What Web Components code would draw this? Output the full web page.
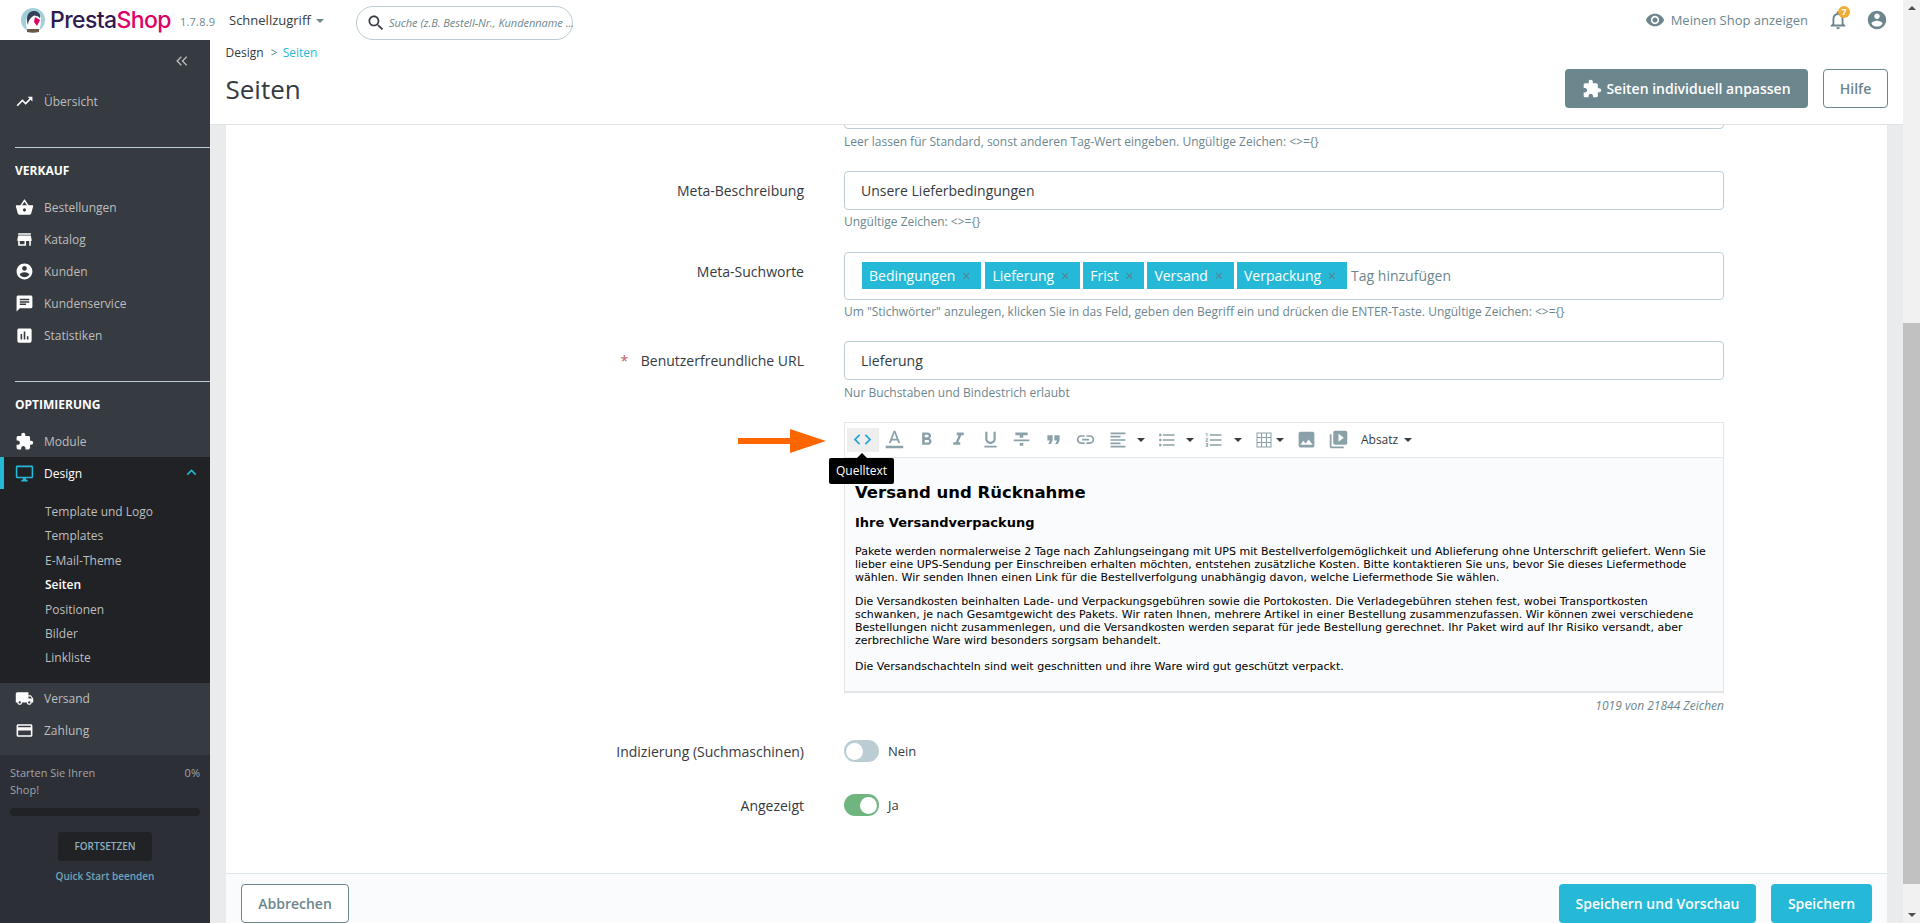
<!DOCTYPE html>
<html lang="de">
<head>
<meta charset="utf-8">
<title>Seiten</title>
<style>
  html, body { margin: 0; height: 100%; overflow: hidden; }
  body { font-family: "Open Sans", "Liberation Sans", sans-serif; font-size: 14px; color: #363a41; background: #eaebec; }
</style>
</head>
<body>
<ps-app>
  <ps-header slot="header"></ps-header>
  <ps-sidebar slot="sidebar">
    <ps-nav-item icon="trending" style="margin-top:45px">Übersicht</ps-nav-item>
    <ps-nav-title style="margin-top:30px">VERKAUF</ps-nav-title>
    <ps-nav-item icon="basket">Bestellungen</ps-nav-item>
    <ps-nav-item icon="store">Katalog</ps-nav-item>
    <ps-nav-item icon="account">Kunden</ps-nav-item>
    <ps-nav-item icon="chat">Kundenservice</ps-nav-item>
    <ps-nav-item icon="stats">Statistiken</ps-nav-item>
    <ps-nav-title style="margin-top:30px">OPTIMIERUNG</ps-nav-title>
    <ps-nav-item icon="extension">Module</ps-nav-item>
    <ps-nav-group icon="desktop" label="Design">
      <ps-nav-sub>Template und Logo</ps-nav-sub>
      <ps-nav-sub>Templates</ps-nav-sub>
      <ps-nav-sub>E-Mail-Theme</ps-nav-sub>
      <ps-nav-sub active>Seiten</ps-nav-sub>
      <ps-nav-sub>Positionen</ps-nav-sub>
      <ps-nav-sub>Bilder</ps-nav-sub>
      <ps-nav-sub>Linkliste</ps-nav-sub>
    </ps-nav-group>
    <ps-nav-item icon="shipping">Versand</ps-nav-item>
    <ps-nav-item icon="card">Zahlung</ps-nav-item>
    <ps-onboarding></ps-onboarding>
  </ps-sidebar>
  <ps-page-head slot="head"></ps-page-head>
  <ps-card slot="main">
    <ps-form-row style="margin-top:-35px;margin-bottom:20px;--help-top:4px" help="Leer lassen für Standard, sonst anderen Tag-Wert eingeben. Ungültige Zeichen: &lt;&gt;={}">
      <ps-input></ps-input>
    </ps-form-row>
    <ps-form-row label="Meta-Beschreibung" help="Ungültige Zeichen: &lt;&gt;={}">
      <ps-input>Unsere Lieferbedingungen</ps-input>
    </ps-form-row>
    <ps-form-row label="Meta-Suchworte" style="margin-bottom:20px" help="Um &quot;Stichwörter&quot; anzulegen, klicken Sie in das Feld, geben den Begriff ein und drücken die ENTER-Taste. Ungültige Zeichen: &lt;&gt;={}">
      <ps-tags>
        <ps-tag style="margin-right:1px">Bedingungen</ps-tag>
        <ps-tag>Lieferung</ps-tag>
        <ps-tag>Frist</ps-tag>
        <ps-tag>Versand</ps-tag>
        <ps-tag>Verpackung</ps-tag>
      </ps-tags>
    </ps-form-row>
    <ps-form-row required label="Benutzerfreundliche URL" style="margin-bottom:20px;--help-top:4px" help="Nur Buchstaben und Bindestrich erlaubt">
      <ps-input>Lieferung</ps-input>
    </ps-form-row>
    <ps-form-row>
      <ps-editor>
        <h1>Versand und Rücknahme</h1>
        <h2>Ihre Versandverpackung</h2>
        <p class="first">Pakete werden normalerweise 2 Tage nach Zahlungseingang mit UPS mit Bestellverfolgemöglichkeit und Ablieferung ohne Unterschrift geliefert. Wenn Sie<br>lieber eine UPS-Sendung per Einschreiben erhalten möchten, entstehen zusätzliche Kosten. Bitte kontaktieren Sie uns, bevor Sie dieses Liefermethode<br>wählen. Wir senden Ihnen einen Link für die Bestellverfolgung unabhängig davon, welche Liefermethode Sie wählen.</p>
        <p>Die Versandkosten beinhalten Lade- und Verpackungsgebühren sowie die Portokosten. Die Verladegebühren stehen fest, wobei Transportkosten<br>schwanken, je nach Gesamtgewicht des Pakets. Wir raten Ihnen, mehrere Artikel in einer Bestellung zusammenzufassen. Wir können zwei verschiedene<br>Bestellungen nicht zusammenlegen, und die Versandkosten werden separat für jede Bestellung gerechnet. Ihr Paket wird auf Ihr Risiko versandt, aber<br>zerbrechliche Ware wird besonders sorgsam behandelt.</p>
        <p class="last">Die Versandschachteln sind weit geschnitten und ihre Ware wird gut geschützt verpackt.</p>
      </ps-editor>
    </ps-form-row>
    <ps-form-row label="Indizierung (Suchmaschinen)" style="margin-top:-4px">
      <ps-toggle>Nein</ps-toggle>
    </ps-form-row>
    <ps-form-row label="Angezeigt" style="margin-top:-6px">
      <ps-toggle on>Ja</ps-toggle>
    </ps-form-row>
    <ps-form-footer slot="footer"></ps-form-footer>
  </ps-card>
  <ps-scrollbar slot="scrollbar"></ps-scrollbar>
</ps-app>

<script>
const ICONS = {
  trending: 'M16 6l2.29 2.29-4.88 4.88-4-4L2 16.59 3.41 18l6-6 4 4 6.3-6.29L22 12V6z',
  basket: 'M17.21 9l-4.38-6.56c-.19-.28-.51-.42-.83-.42-.32 0-.64.14-.83.43L6.79 9H2c-.55 0-1 .45-1 1 0 .09.01.18.04.27l2.54 9.27c.23.84 1 1.46 1.92 1.46h13c.92 0 1.69-.62 1.93-1.46l2.54-9.27L23 10c0-.55-.45-1-1-1h-4.79zM9 9l3-4.4L15 9H9zm3 8c-1.1 0-2-.9-2-2s.9-2 2-2 2 .9 2 2-.9 2-2 2z',
  store: 'M20 4H4v2h16V4zm1 10v-2l-1-5H4l-1 5v2h1v6h10v-6h4v6h2v-6h1zm-9 4H6v-4h6v4z',
  account: 'M12 2C6.48 2 2 6.48 2 12s4.48 10 10 10 10-4.48 10-10S17.52 2 12 2zm0 3c1.66 0 3 1.34 3 3s-1.34 3-3 3-3-1.34-3-3 1.34-3 3-3zm0 14.2c-2.5 0-4.71-1.28-6-3.22.03-1.99 4-3.08 6-3.08 1.99 0 5.97 1.09 6 3.08-1.29 1.94-3.5 3.22-6 3.22z',
  chat: 'M20 2H4c-1.1 0-1.99.9-1.99 2L2 22l4-4h14c1.1 0 2-.9 2-2V4c0-1.1-.9-2-2-2zM6 9h12v2H6V9zm8 5H6v-2h8v2zm4-6H6V6h12v2z',
  stats: 'M19 3H5c-1.1 0-2 .9-2 2v14c0 1.1.9 2 2 2h14c1.1 0 2-.9 2-2V5c0-1.1-.9-2-2-2zM9 17H7v-7h2v7zm4 0h-2V7h2v10zm4 0h-2v-4h2v4z',
  extension: 'M20.5 11H19V7c0-1.1-.9-2-2-2h-4V3.5C13 2.12 11.88 1 10.5 1S8 2.12 8 3.5V5H4c-1.1 0-1.99.9-1.99 2v3.8H3.5c1.49 0 2.7 1.21 2.7 2.7s-1.21 2.7-2.7 2.7H2V20c0 1.1.9 2 2 2h3.8v-1.5c0-1.49 1.21-2.7 2.7-2.7 1.49 0 2.7 1.21 2.7 2.7V22H17c1.1 0 2-.9 2-2v-4h1.5c1.38 0 2.5-1.12 2.5-2.5S21.88 11 20.5 11z',
  desktop: 'M21 2H3c-1.1 0-2 .9-2 2v12c0 1.1.9 2 2 2h7v2H8v2h8v-2h-2v-2h7c1.1 0 2-.9 2-2V4c0-1.1-.9-2-2-2zm0 14H3V4h18v12z',
  shipping: 'M20 8h-3V4H3c-1.1 0-2 .9-2 2v11h2c0 1.66 1.34 3 3 3s3-1.34 3-3h6c0 1.66 1.34 3 3 3s3-1.34 3-3h2v-5l-3-4zM6 18.5c-.83 0-1.5-.67-1.5-1.5s.67-1.5 1.5-1.5 1.5.67 1.5 1.5-.67 1.5-1.5 1.5zm13.5-9l1.96 2.5H17V9.5h2.5zm-1.5 9c-.83 0-1.5-.67-1.5-1.5s.67-1.5 1.5-1.5 1.5.67 1.5 1.5-.67 1.5-1.5 1.5z',
  card: 'M20 4H4c-1.11 0-1.99.89-1.99 2L2 18c0 1.11.89 2 2 2h16c1.11 0 2-.89 2-2V6c0-1.11-.89-2-2-2zm0 14H4v-6h16v6zm0-10H4V6h16v2z',
  eye: 'M12 4.5C7 4.5 2.73 7.61 1 12c1.73 4.39 6 7.5 11 7.5s9.27-3.11 11-7.5c-1.73-4.39-6-7.5-11-7.5zM12 17c-2.76 0-5-2.24-5-5s2.24-5 5-5 5 2.24 5 5-2.24 5-5 5zm0-8c-1.66 0-3 1.34-3 3s1.34 3 3 3 3-1.34 3-3-1.34-3-3-3z',
  bell: 'M12 22c1.1 0 2-.9 2-2h-4c0 1.1.9 2 2 2zm6-6v-5c0-3.07-1.63-5.64-4.5-6.32V4c0-.83-.67-1.5-1.5-1.5s-1.5.67-1.5 1.5v.68C7.64 5.36 6 7.92 6 11v5l-2 2v1h16v-1l-2-2zm-2 1H8v-6c0-2.48 1.51-4.5 4-4.5s4 2.02 4 4.5v6z',
  search: 'M15.5 14h-.79l-.28-.27C15.41 12.59 16 11.11 16 9.5 16 5.91 13.09 3 9.5 3S3 5.91 3 9.5 5.91 16 9.5 16c1.61 0 3.09-.59 4.23-1.57l.27.28v.79l5 4.99L20.49 19l-4.99-5zm-6 0C7.01 14 5 11.99 5 9.5S7.01 5 9.5 5 14 7.01 14 9.5 11.99 14 9.5 14z',
  code: 'M9.4 16.6L4.8 12l4.6-4.6L8 6l-6 6 6 6 1.4-1.4zm5.2 0l4.6-4.6-4.6-4.6L16 6l6 6-6 6-1.4-1.4z',
  color: 'M11 2L5.5 16h2.25l1.12-3h6.25l1.12 3h2.25L13 2h-2zM9.62 11L12 4.67 14.38 11H9.62zM2 19h20v3H2z',
  bold: 'M15.6 10.79c.97-.67 1.65-1.77 1.65-2.79 0-2.26-1.75-4-4-4H7v14h7.04c2.09 0 3.71-1.7 3.71-3.79 0-1.52-.86-2.82-2.15-3.42zM10 6.5h3c.83 0 1.5.67 1.5 1.5s-.67 1.5-1.5 1.5h-3v-3zm3.5 9H10v-3h3.5c.83 0 1.5.67 1.5 1.5s-.67 1.5-1.5 1.5z',
  italic: 'M10 4v3h2.21l-3.42 8H6v3h8v-3h-2.21l3.42-8H18V4z',
  underline: 'M12 17c3.31 0 6-2.69 6-6V3h-2.5v8c0 1.93-1.57 3.5-3.5 3.5S8.5 12.93 8.5 11V3H6v8c0 3.31 2.69 6 6 6zm-7 2v2h14v-2H5z',
  strike: 'M10 19h4v-3h-4v3zM5 4v3h5v3h4V7h5V4H5zM3 14h18v-2H3v2z',
  quote: 'M6 17h3l2-4V7H5v6h3zm8 0h3l2-4V7h-6v6h3z',
  link: 'M3.9 12c0-1.71 1.39-3.1 3.1-3.1h4V7H7c-2.76 0-5 2.24-5 5s2.24 5 5 5h4v-1.9H7c-1.71 0-3.1-1.39-3.1-3.1zM8 13h8v-2H8v2zm9-6h-4v1.9h4c1.71 0 3.1 1.39 3.1 3.1s-1.39 3.1-3.1 3.1h-4V17h4c2.76 0 5-2.24 5-5s-2.24-5-5-5z',
  alignleft: 'M15 15H3v2h12v-2zm0-8H3v2h12V7zM3 13h18v-2H3v2zm0 8h18v-2H3v2zM3 3v2h18V3H3z',
  bullets: 'M4 10.5c-.83 0-1.5.67-1.5 1.5s.67 1.5 1.5 1.5 1.5-.67 1.5-1.5-.67-1.5-1.5-1.5zm0-6c-.83 0-1.5.67-1.5 1.5S3.17 7.5 4 7.5 5.5 6.83 5.5 6 4.83 4.5 4 4.5zm0 12c-.83 0-1.5.68-1.5 1.5s.68 1.5 1.5 1.5 1.5-.68 1.5-1.5-.67-1.5-1.5-1.5zM7 19h14v-2H7v2zm0-6h14v-2H7v2zm0-8v2h14V5H7z',
  numbers: 'M2 17h2v.5H3v1h1v.5H2v1h3v-4H2v1zm1-9h1V4H2v1h1v3zm-1 3h1.8L2 13.1v.9h3v-1H3.2L5 10.9V10H2v1zm5-6v2h14V5H7zm0 14h14v-2H7v2zm0-6h14v-2H7v2z',
  table: 'M3 3h1.2v18H3zM8.400 3h1.200v18H8.400zM14.400 3h1.200v18h-1.200zM19.800 3H21v18h-1.200zM3 3h18v1.200H3zM3 8.400h18v1.200H3zM3 14.400h18v1.200H3zM3 19.800h18V21H3z',
  image: 'M21 19V5c0-1.1-.9-2-2-2H5c-1.1 0-2 .9-2 2v14c0 1.1.9 2 2 2h14c1.1 0 2-.9 2-2zM8.5 13.5l2.5 3.01L14.5 12l4.5 6H5l3.5-4.5z',
  video: 'M4 6H2v14c0 1.1.9 2 2 2h14v-2H4V6zm16-4H8c-1.1 0-2 .9-2 2v12c0 1.1.9 2 2 2h12c1.1 0 2-.9 2-2V4c0-1.1-.9-2-2-2zm-8 12.5v-9l6 4.5-6 4.5z',
  chevronup: 'M7.41 15.41L12 10.83l4.59 4.58L18 14l-6-6-6 6z'
};

// small helper, every element below is just a template in an open shadow root
function define(tag, html, extra = {}) {
  const tpl = document.createElement('template');
  tpl.innerHTML = html;
  customElements.define(tag, class extends HTMLElement {
    static get observedAttributes() { return extra.observed || []; }
    constructor() {
      super();
      this.attachShadow({ mode: 'open' }).appendChild(tpl.content.cloneNode(true));
    }
    connectedCallback() {
      if (extra.connected) extra.connected.call(this, this.shadowRoot);
    }
    attributeChangedCallback(name, old, value) {
      if (extra.changed) extra.changed.call(this, this.shadowRoot, name, value);
    }
  });
}

define('ps-icon', `<style>
  :host { display: inline-flex; width: 18px; height: 18px; flex: none; color: inherit; }
  svg { width: 100%; height: 100%; fill: currentColor; display: block; }
</style><svg viewBox="0 0 24 24"><path></path></svg>`, {
  observed: ['name'],
  changed(root, name, value) { root.querySelector('path').setAttribute('d', ICONS[value] || ''); }
});

define('ps-app', `<style>
  :host { display: grid; height: 923px; grid-template-columns: 210px 1fr 17px; grid-template-rows: 40px 84.500px minmax(0, 1fr); background: #eaebec; }
  ::slotted([slot=header]) { grid-column: 1 / 3; }
  ::slotted([slot=sidebar]) { grid-row: 2 / 4; }
  ::slotted([slot=scrollbar]) { grid-column: 3; grid-row: 1 / 4; }
  ::slotted([slot=head]) { grid-column: 2; grid-row: 2; }
  ::slotted([slot=main]) { grid-column: 2; grid-row: 3; }
</style>
<slot name="header"></slot><slot name="sidebar"></slot><slot name="head"></slot><slot name="main"></slot><slot name="scrollbar"></slot>`);

define('ps-header', `<style>
  :host { display: flex; align-items: center; height: 40px; background: #fff; padding-left: 21px; box-sizing: border-box; position: relative; z-index: 2; }
  .logo { display: flex; align-items: center; gap: 5px; width: 159px; flex: none; }
  .logo svg { flex: none; }
  .name { font-family: "Inter", "Open Sans", sans-serif; font-size: 23px; font-weight: 500; letter-spacing: -.6px; color: #2e1a50; line-height: 1; }
  .name b { font-weight: 500; color: #df0067; }
  .ver { font-size: 11px; color: #6c868e; width: 49px; padding-top: 2px; letter-spacing: .2px; flex: none; }
  .quick { font-size: 13px; color: #363a41; display: flex; align-items: center; gap: 5px; width: 127px; flex: none; }
  .caret { border: 4px solid transparent; border-top-color: #6c868e; border-bottom: 0; margin-top: 1px; width: 0; height: 0; }
  .search { width: 217px; height: 34px; margin-top: 5px; border: 1px solid #bbcdd2; border-radius: 17px; box-sizing: border-box; display: flex; align-items: center; gap: 3px; padding-left: 9px; color: #363a41; flex: none; }
  .search ps-icon { width: 20px; height: 20px; }
  .search span { font-size: 11px; letter-spacing: -.02px; font-style: italic; color: #6c868e; white-space: nowrap; }
  .right { margin-left: auto; display: flex; align-items: center; padding-right: 15px; }
  .shop { display: flex; align-items: center; gap: 6px; font-size: 13px; color: #6c868e; }
  .shop ps-icon { width: 20px; height: 20px; }
  .bell { position: relative; margin-left: 19px; width: 22px; height: 22px; color: #6c868e; }
  .bell ps-icon { width: 22px; height: 22px; }
  .badge { position: absolute; left: 11px; top: -3px; width: 12px; height: 12px; border-radius: 50%; background: #f0ad35; color: #fff; font-size: 9px; font-weight: 700; line-height: 12px; text-align: center; }
  .acct { margin-left: 17px; color: #6c868e; width: 22px; height: 22px; }
</style>
<div class="logo">
  <svg width="24" height="26" viewBox="0 0 24 26">
    <circle cx="12" cy="13" r="12" fill="#a3d0d8"/>
    <path d="M7 25 C3 17 5 7 12 5 C17 4 20 8 20 13 C20 18 19 22 17 25 Z" fill="#fff"/>
    <path d="M6 12 C6 6 10 3.500 14 4 C18 4.500 20 8 19 11 C16 8 12 8 10 11 C8 13 7 15 7 18 C6 16 6 14 6 12 Z" fill="#34405a"/>
    <path d="M14 10 L19 13 L16 19 L13 15 Z" fill="#df0067"/>
    <circle cx="13.500" cy="9.500" r="1" fill="#fff"/>
    <path d="M6 22 H18 V25 C14 26 10 26 6 25 Z" fill="#6b5a48"/>
  </svg>
  <span class="name">Presta<b>Shop</b></span>
</div>
<span class="ver">1.7.8.9</span>
<span class="quick">Schnellzugriff <i class="caret"></i></span>
<div class="search"><ps-icon name="search"></ps-icon><span>Suche (z.B. Bestell-Nr., Kundenname ...</span></div>
<div class="right">
  <div class="shop"><ps-icon name="eye"></ps-icon>Meinen Shop anzeigen</div>
  <div class="bell"><ps-icon name="bell"></ps-icon><span class="badge">7</span></div>
  <ps-icon class="acct" name="account"></ps-icon>
</div>`);

define('ps-sidebar', `<style>
  :host { display: flex; flex-direction: column; background: #363a41; color: #bebebe; overflow: hidden; }
  .toggle { position: absolute; left: 174px; top: 53px; width: 16px; height: 16px; color: #bebebe; }
</style>
<svg class="toggle" viewBox="0 0 24 24" fill="currentColor"><path d="M11.700 6.400 10.300 5l-7 7 7 7 1.400-1.400L6.100 12zM19.700 6.400 18.300 5l-7 7 7 7 1.400-1.400L14.100 12z"/></svg>
<slot></slot>`);

define('ps-nav-item', `<style>
  :host { display: flex; align-items: center; height: 32px; padding-left: 15px; gap: 10px; font-size: 12px; color: #bebebe; flex: none; }
  ps-icon { color: #fff; width: 19px; height: 19px; }
</style><ps-icon></ps-icon><span><slot></slot></span>`, {
  connected(root) {
    const icon = root.querySelector('ps-icon');
    icon.setAttribute('name', this.getAttribute('icon'));
  }
});

define('ps-nav-title', `<style>
  :host { display: block; margin-left: 15px; border-top: 1px solid #bbcdd2; padding: 14px 0 12px; font-size: 12px; font-weight: 700; line-height: 17px; color: #fff; flex: none; }
</style><slot></slot>`);

define('ps-nav-group', `<style>
  :host { display: block; background: #202226; flex: none; padding-bottom: 12px; }
  .top { display: flex; align-items: center; height: 32px; gap: 10px; font-size: 12px; color: #fff; border-left: 4px solid #25b9d7; padding-left: 11px; margin-bottom: 11px; position: relative; }
  .top ps-icon { color: #25b9d7; width: 19px; height: 19px; }
  .chev { position: absolute; right: 9px; top: 6px; color: #6c868e; }
</style>
<div class="top"><ps-icon></ps-icon><span class="lbl"></span><ps-icon class="chev" name="chevronup"></ps-icon></div>
<slot></slot>`, {
  connected(root) {
    root.querySelector('ps-icon').setAttribute('name', this.getAttribute('icon'));
    root.querySelector('.lbl').textContent = this.getAttribute('label');
  }
});

define('ps-nav-sub', `<style>
  :host { display: block; height: 24.400px; line-height: 24px; padding-left: 45px; font-size: 12px; color: #bebebe; }
  :host([active]) { color: #fff; font-weight: 600; }
</style><slot></slot>`);

define('ps-onboarding', `<style>
  :host { display: block; background: #2c2f36; margin-top: 8px; flex: 1; padding: 9px 10px 0; font-size: 11px; color: #a0a4a8; line-height: 17px; }
  .top { display: flex; justify-content: space-between; height: 35px; }
  .top span:first-child { width: 110px; }
  .bar { height: 8px; background: #202226; border-radius: 4px; margin-top: 9px; }
  .btn { display: block; width: 94px; height: 29px; line-height: 29px; margin: 16px auto 0; background: #202226; border-radius: 3px; text-align: center; font-size: 10px; font-weight: 600; color: #8fb0bb; }
  .end { text-align: center; font-size: 10px; font-weight: 600; color: #6ea4bb; margin-top: 7px; }
</style>
<div class="top"><span>Starten Sie Ihren Shop!</span><span>0%</span></div>
<div class="bar"></div>
<span class="btn">FORTSETZEN</span>
<div class="end">Quick Start beenden</div>`);

define('ps-page-head', `<style>
  :host { display: block; height: 84.500px; box-sizing: border-box; background: #fff; border-bottom: 1px solid #dfe3e5; padding: 4px 15px 0 15.500px; position: relative; z-index: 1; }
  .crumb { font-size: 12px; line-height: 18px; color: #363a41; }
  .crumb i { font-style: normal; margin: 0 2px 0 4px; color: #6c868e; }
  .crumb b { font-weight: 400; color: #25b9d7; }
  h1 { margin: 9px 0 0; font-size: 26px; font-weight: 400; line-height: 36px; color: #363a41; }
  .row { display: flex; align-items: flex-start; justify-content: space-between; }
  .btns { display: flex; gap: 15px; margin-top: 7px; }
  .btn { height: 39px; box-sizing: border-box; border-radius: 4px; display: flex; align-items: center; font-size: 14px; font-weight: 600; }
  .a { width: 243px; background: #6c868e; color: #fff; justify-content: center; gap: 4px; }
  .a ps-icon { width: 20px; height: 20px; }
  .b { width: 65px; border: 1px solid #6c868e; color: #6c868e; background: #fff; justify-content: center; }
</style>
<div class="crumb">Design<i> &gt; </i><b>Seiten</b></div>
<div class="row"><h1>Seiten</h1><div class="btns"><span class="btn a"><ps-icon name="extension"></ps-icon>Seiten individuell anpassen</span><span class="btn b">Hilfe</span></div></div>`);

define('ps-card', `<style>
  :host { display: flex; flex-direction: column; margin: 0 16px; background: #fff; min-height: 0; }
  .body { flex: 1; min-height: 0; overflow: hidden; }
</style>
<div class="body"><slot></slot></div><slot name="footer"></slot>`);

define('ps-form-row', `<style>
  :host { display: grid; grid-template-columns: 578px 880px; column-gap: 40px; margin-bottom: 21px; }
  .label { text-align: right; font-size: 14px; line-height: 21px; padding-top: 9px; color: #363a41; }
  .label i { color: #c05c67; font-style: normal; margin-right: 9px; }
  .help { font-size: 12px; line-height: 18px; color: #6c868e; margin-top: var(--help-top, 3px); white-space: nowrap; }
</style>
<div class="label"></div><div><slot></slot><div class="help"></div></div>`, {
  connected(root) {
    const label = this.getAttribute('label');
    if (label) root.querySelector('.label').innerHTML = (this.hasAttribute('required') ? '<i>*</i> ' : '') + label;
    const help = this.getAttribute('help');
    if (help) root.querySelector('.help').textContent = help; else root.querySelector('.help').remove();
  }
});

define('ps-input', `<style>
  :host { display: block; height: 39px; box-sizing: border-box; border: 1px solid #bbcdd2; border-radius: 4px; padding: 0 16px; line-height: 37px; font-size: 14px; color: #363a41; }
</style><slot></slot>`);

define('ps-tags', `<style>
  :host { display: flex; align-items: center; gap: 3px; height: 48px; box-sizing: border-box; border: 1px solid #bbcdd2; border-radius: 4px; padding: 0 0 0 17px; }
  span { font-size: 14px; color: #6c868e; margin-left: 1px; }
</style><slot></slot><span>Tag hinzufügen</span>`);

define('ps-tag', `<style>
  :host { display: flex; align-items: center; height: 27px; background: #25b9d7; color: #fff; font-size: 14px; padding: 0 11px 0 7px; gap: 7px; }
  i { font-style: normal; color: #5a7f8e; font-size: 14px; line-height: 1; }
</style><slot></slot><i>×</i>`);

define('ps-toggle', `<style>
  :host { display: flex; align-items: center; height: 39px; gap: 9px; font-size: 13px; color: #363a41; }
  .sw { width: 35px; height: 22px; border-radius: 11px; background: #bbcdd2; position: relative; }
  .sw::after { content: ""; position: absolute; left: 2px; top: 2.500px; width: 17px; height: 17px; border-radius: 50%; background: #fff; }
  :host([on]) .sw { background: #70b580; }
  :host([on]) .sw::after { left: 16px; }
</style><span class="sw"></span><span><slot></slot></span>`);

define('ps-form-footer', `<style>
  :host { display: flex; align-items: flex-start; height: 50px; box-sizing: border-box; border-top: 1px solid #dbe6e9; background: #fafbfc; padding: 10px 16px 0 15px; flex: none; gap: 15px; }
  span { height: 39px; box-sizing: border-box; border-radius: 4px; display: flex; align-items: center; justify-content: center; font-size: 14px; font-weight: 600; background: #25b9d7; color: #fff; }
  .cancel { width: 108px; background: #fff; border: 1px solid #6c868e; color: #6c868e; margin-right: auto; }
  .prev { width: 197px; }
  .save { width: 101px; margin-right: -1px; }
</style>
<span class="cancel">Abbrechen</span><span class="prev">Speichern und Vorschau</span><span class="save">Speichern</span>`);

define('ps-editor', `<style>
  :host { display: block; }
  .box { border: 1px solid #e4e6e8; border-bottom-width: 2px; height: 271px; box-sizing: border-box; background: #fafbfc; position: relative; }
  .bar { height: 35px; box-sizing: border-box; background: #fff; border-bottom: 1px solid #e4e6e8; display: flex; align-items: center; padding-left: 2px; color: #8ba1a9; }
  .tb { width: 31.800px; height: 24px; display: flex; align-items: center; justify-content: center; flex: none; }
  .tb ps-icon { width: 21px; height: 21px; }
  .tb.on { background: #eee; color: #25a5d7; }
  .drop { display: flex; align-items: center; gap: 9px; flex: none; padding: 0 5px 0 7px; }
  .drop ps-icon { width: 20px; height: 20px; }
  .caret { border: 4px solid transparent; border-top-color: #363a41; border-bottom: 0; width: 0; height: 0; flex: none; }
  .fmt { font-size: 12px; color: #363a41; display: flex; align-items: center; gap: 6px; margin-left: 7px; }
  .content { padding: 25px 10px 0; color: #000; font-family: "DejaVu Sans", Verdana, sans-serif; font-size: 11px; line-height: 13px; white-space: nowrap; }
  ::slotted(h1) { font-size: 16.500px; line-height: 20px; margin: 0; font-weight: 700; }
  ::slotted(h2) { font-size: 13px; line-height: 16px; margin: 12px 0 0; font-weight: 700; }
  ::slotted(p) { margin: 10.500px 0 0; }
  ::slotted(p.first) { margin-top: 14.500px; }
  ::slotted(p.last) { margin-top: 13px; }
  .count { font-size: 12px; font-style: italic; color: #6c868e; text-align: right; line-height: 18px; margin-top: 4px; }
  .arrow { position: absolute; left: -107px; top: 6px; }
  .tip { position: absolute; left: -16px; top: 35px; background: #000; color: #fff; font-size: 12px; line-height: 26px; padding: 0 7px; border-radius: 2px; z-index: 2; }
  .tip::before { content: ""; position: absolute; left: 28px; top: -5px; border: 5px solid transparent; border-top: 0; border-bottom-color: #000; }
</style>
<div class="box">
  <div class="bar">
    <span class="tb on"><ps-icon name="code"></ps-icon></span>
    <span class="tb"><ps-icon name="color"></ps-icon></span>
    <span class="tb"><ps-icon name="bold"></ps-icon></span>
    <span class="tb"><ps-icon name="italic"></ps-icon></span>
    <span class="tb"><ps-icon name="underline"></ps-icon></span>
    <span class="tb"><ps-icon name="strike"></ps-icon></span>
    <span class="tb"><ps-icon name="quote"></ps-icon></span>
    <span class="tb"><ps-icon name="link"></ps-icon></span>
    <span class="drop"><ps-icon name="alignleft"></ps-icon><i class="caret"></i></span>
    <span class="drop" style="padding-right:3px"><ps-icon name="bullets"></ps-icon><i class="caret"></i></span>
    <span class="drop" style="gap:10px;padding-right:5px"><ps-icon name="numbers"></ps-icon><i class="caret"></i></span>
    <span class="drop" style="gap:2px;padding-right:6px"><ps-icon name="table"></ps-icon><i class="caret"></i></span>
    <span class="tb"><ps-icon name="image"></ps-icon></span>
    <span class="tb"><ps-icon name="video"></ps-icon></span>
    <span class="fmt">Absatz <i class="caret"></i></span>
  </div>
  <div class="content"><slot></slot></div>
  <svg class="arrow" width="88" height="24" viewBox="0 0 88 24"><path d="M0 9h52V0l36 12-36 12v-9H0z" fill="#ff6600"/></svg>
  <div class="tip">Quelltext</div>
</div>
<div class="count">1019 von 21844 Zeichen</div>`);

define('ps-scrollbar', `<style>
  :host { display: flex; flex-direction: column; background: #f1f1f1; align-items: center; position: relative; z-index: 3; }
  .up, .down { width: 0; height: 0; border: 4px solid transparent; margin: 6px 0; }
  .up { border-top: 0; border-bottom-color: #505050; }
  .down { border-bottom: 0; border-top-color: #505050; margin-top: auto; }
  .thumb { width: 100%; height: 561px; background: #c1c1c1; margin-top: 307px; }
</style><i class="up"></i><div class="thumb"></div><i class="down"></i>`);
</script>
</body>
</html>
